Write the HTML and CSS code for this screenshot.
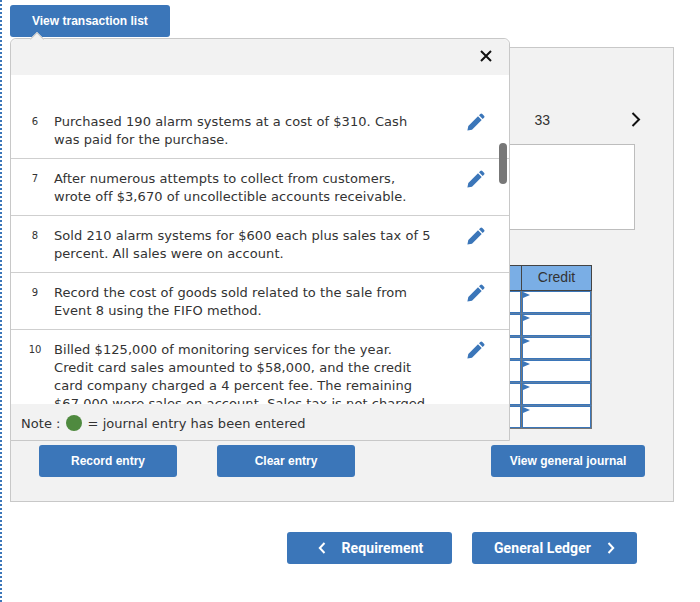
FILE: index.html
```html
<!DOCTYPE html>
<html lang="en">
<head>
<meta charset="utf-8">
<title>Journal entry worksheet</title>
<link rel="stylesheet" href="styles.css">
</head>
<body>
<div class="page">
  <button class="btn btn-list" type="button">View transaction list</button>
  <section class="panel">
    <div class="panel-head">
      <span class="page-num">33</span>
      <svg class="next" viewBox="0 0 10 16" width="10" height="16" aria-hidden="true"><path d="M1.500 1 8 7.500 1.500 14" fill="none" stroke="#111" stroke-width="2"/></svg>
    </div>
    <div class="desc-box"></div>
    <table class="grid">
      <thead><tr><th class="col-account"></th><th class="col-num"></th><th class="col-num">Credit</th></tr></thead>
      <tbody>
        <tr><td></td><td class="mark"></td><td class="mark"></td></tr>
        <tr><td></td><td class="mark"></td><td class="mark"></td></tr>
        <tr><td></td><td class="mark"></td><td class="mark"></td></tr>
        <tr><td></td><td class="mark"></td><td class="mark"></td></tr>
        <tr><td></td><td class="mark"></td><td class="mark"></td></tr>
        <tr><td></td><td class="mark"></td><td class="mark"></td></tr>
      </tbody>
    </table>
    <div class="actions">
      <button class="btn btn-action" type="button">Record entry</button>
      <button class="btn btn-action" type="button">Clear entry</button>
      <button class="btn btn-journal" type="button">View general journal</button>
    </div>
  </section>
  <nav class="nav">
    <button class="btn btn-nav btn-back" type="button">
      <svg viewBox="0 0 8 12" width="8" height="12" aria-hidden="true"><path d="M6.500 1 1.800 6l4.700 5" fill="none" stroke="#fff" stroke-width="2"/></svg>
      Requirement
    </button>
    <button class="btn btn-nav" type="button">
      General Ledger
      <svg viewBox="0 0 8 12" width="8" height="12" aria-hidden="true"><path d="M1.500 1 6.200 6l-4.700 5" fill="none" stroke="#fff" stroke-width="2"/></svg>
    </button>
  </nav>

  <aside class="popup">
    <div class="popup-head">
      <svg class="close" viewBox="0 0 12 12" width="12" height="12" aria-hidden="true"><path d="M1 1l10 10M11 1 1 11" fill="none" stroke="#111" stroke-width="2"/></svg>
    </div>
    <ul class="events">
      <li class="event">
        <span class="num">6</span>
        <p class="text">Purchased 190 alarm systems at a cost of $310. Cash was paid for the purchase.</p>
        <svg class="pencil" viewBox="0 0 18 18" width="18" height="18" aria-hidden="true"><path d="M.4 17.600 1.300 13 11 3.300 14.700 7 5 16.700ZM12 2.300 13.300 1a1.400 1.400 0 0 1 2 0L17 2.700a1.400 1.400 0 0 1 0 2L15.700 6Z" fill="#3b76b9"/></svg>
      </li>
      <li class="event">
        <span class="num">7</span>
        <p class="text">After numerous attempts to collect from customers, wrote off $3,670 of uncollectible accounts receivable.</p>
        <svg class="pencil" viewBox="0 0 18 18" width="18" height="18" aria-hidden="true"><path d="M.4 17.600 1.300 13 11 3.300 14.700 7 5 16.700ZM12 2.300 13.300 1a1.400 1.400 0 0 1 2 0L17 2.700a1.400 1.400 0 0 1 0 2L15.700 6Z" fill="#3b76b9"/></svg>
      </li>
      <li class="event">
        <span class="num">8</span>
        <p class="text">Sold 210 alarm systems for $600 each plus sales tax of 5 percent. All sales were on account.</p>
        <svg class="pencil" viewBox="0 0 18 18" width="18" height="18" aria-hidden="true"><path d="M.4 17.600 1.300 13 11 3.300 14.700 7 5 16.700ZM12 2.300 13.300 1a1.400 1.400 0 0 1 2 0L17 2.700a1.400 1.400 0 0 1 0 2L15.700 6Z" fill="#3b76b9"/></svg>
      </li>
      <li class="event">
        <span class="num">9</span>
        <p class="text">Record the cost of goods sold related to the sale from Event 8 using the FIFO method.</p>
        <svg class="pencil" viewBox="0 0 18 18" width="18" height="18" aria-hidden="true"><path d="M.4 17.600 1.300 13 11 3.300 14.700 7 5 16.700ZM12 2.300 13.300 1a1.400 1.400 0 0 1 2 0L17 2.700a1.400 1.400 0 0 1 0 2L15.700 6Z" fill="#3b76b9"/></svg>
      </li>
      <li class="event">
        <span class="num">10</span>
        <p class="text">Billed $125,000 of monitoring services for the year. Credit card sales amounted to $58,000, and the credit card company charged a 4 percent fee. The remaining $67,000 were sales on account. Sales tax is not charged</p>
        <svg class="pencil" viewBox="0 0 18 18" width="18" height="18" aria-hidden="true"><path d="M.4 17.600 1.300 13 11 3.300 14.700 7 5 16.700ZM12 2.300 13.300 1a1.400 1.400 0 0 1 2 0L17 2.700a1.400 1.400 0 0 1 0 2L15.700 6Z" fill="#3b76b9"/></svg>
      </li>
    </ul>
    <div class="scroll-thumb"></div>
    <div class="note">Note : <span class="dot"></span> = journal entry has been entered</div>
  </aside>
</div>
</body>
</html>
```
FILE: styles.css
```css
* { box-sizing: border-box; }
html, body { margin: 0; padding: 0; background: #fff; }
body { width: 700px; height: 602px; overflow: hidden; font-family: "DejaVu Sans", sans-serif; color: #333; }
.page { position: relative; height: 602px; padding: 5px 26px 0 8px; border-left: 2px dotted #3b76b9; }

.btn { display: block; border: 0; border-radius: 3px; background: #3b76b9; color: #fff; font-family: "Liberation Sans", sans-serif; font-weight: bold; font-size: 12px; height: 32px; padding: 0 0 1px; }
.btn-list { width: 160px; text-align: left; padding: 0 0 1px 22px; }

.panel { margin-top: 10px; width: 664px; height: 455px; border: 1px solid #c8c8c8; background: #f2f2f2; display: flex; flex-direction: column; align-items: flex-end; }
.panel-head { width: 100%; height: 96px; padding: 62px 32px 0 0; display: flex; justify-content: flex-end; align-items: flex-start; font-family: "Liberation Sans", sans-serif; font-size: 14px; color: #333; }
.page-num { line-height: 20px; margin-right: 81px; }
.next { margin-top: 2px; }
.desc-box { width: 400px; height: 86px; margin-right: 38px; background: #fff; border: 1px solid #bdbdbd; }

.grid { margin: 35px 81px 0 0; width: 530px; border-collapse: collapse; table-layout: fixed; }
.grid th { height: 25px; padding: 0 0 2px; background: #7aaee5; border: 1px solid #444; font-family: "Liberation Sans", sans-serif; font-size: 14px; font-weight: normal; color: #333; }
.grid .col-num { width: 70px; }
.grid td { height: 23px; padding: 0; background: #fff; border: 1px solid #777; border-bottom-color: #5a7ea6; box-shadow: inset 0 0 0 1px #3b76b9; position: relative; }
.grid tr:last-child td { border-bottom-color: #777; }
.grid .mark::before { content: ""; position: absolute; left: 1px; top: 1px; border-left: 7px solid #3b76b9; border-top: 3.500px solid transparent; border-bottom: 3.500px solid transparent; }

.actions { width: 100%; margin-top: 16px; padding: 0 28px; display: flex; }
.btn-action { width: 138px; margin-right: 40px; }
.btn-journal { width: 154px; margin-left: auto; }

.nav { margin-top: 30px; padding-right: 37px; width: 664px; display: flex; justify-content: flex-end; gap: 20px; }
.btn-nav { width: 165px; display: flex; align-items: center; justify-content: center; gap: 16px; padding: 0; font-family: Roboto, sans-serif; font-size: 14px; letter-spacing: 0.1px; }
.btn-back { padding-left: 2px; }

.popup { position: absolute; left: 8px; top: 38px; width: 500px; height: 403px; background: #fff; border: 1px solid #c8c8c8; border-radius: 6px 6px 0 0; display: flex; flex-direction: column; }
.popup::before { content: ""; position: absolute; left: 21px; top: -5px; width: 9px; height: 9px; background: #f2f2f2; border-left: 1px solid #c8c8c8; border-top: 1px solid #c8c8c8; transform: rotate(45deg); }
.popup-head { height: 36px; flex: none; background: #f2f2f2; border-radius: 6px 6px 0 0; padding: 11px 17px 0 0; display: flex; justify-content: flex-end; align-items: flex-start; }

.events { flex: 1; min-height: 0; overflow: hidden; list-style: none; margin: 0; padding: 27px 0 0; }
.event { display: flex; align-items: flex-start; padding: 11px 0 9px; border-bottom: 1px solid #cfcfcf; }
.num { width: 20px; margin-left: 14px; flex: none; text-align: center; font-size: 10px; line-height: 18px; color: #333; }
.text { margin: 0 0 0 9px; width: 379px; flex: none; font-size: 13px; letter-spacing: 0.06px; line-height: 18px; color: #333; }
.pencil { margin-left: 34px; flex: none; }

.scroll-thumb { position: absolute; left: 488px; top: 104px; width: 8px; height: 41px; border-radius: 4px; background: #777; }

.note { height: 36px; flex: none; background: #f2f2f2; padding: 2px 0 0 10px; display: flex; align-items: center; font-size: 13px; letter-spacing: 0.04px; color: #333; }
.dot { display: inline-block; width: 16px; height: 16px; border-radius: 50%; background: #4f8a3f; margin: 0 6px 0 5px; }
```
